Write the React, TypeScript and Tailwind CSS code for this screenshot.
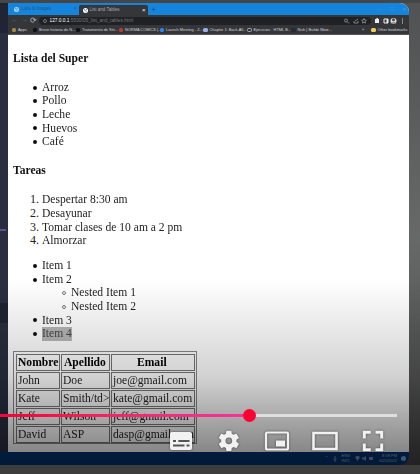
import type { ReactNode } from "react";

function T({ children, className = "" }: { children: ReactNode; className?: string }) {
  return <span className={`inline-block origin-left scale-x-[0.965] whitespace-nowrap ${className}`}>{children}</span>;
}

function Item({ children, mark = "disc", nested = false }: { children: ReactNode; mark?: string; nested?: boolean }) {
  return (
    <li className={`flex h-[13.6px] items-center ${nested ? "pl-[40px]" : "pl-[11px]"}`}>
      <span className="flex w-[18px] shrink-0 justify-end">
        {mark === "disc" && <i className="mr-[5.5px] size-[4px] rounded-full bg-[#111]" />}
        {mark === "circle" && <i className="mr-[5.5px] size-[4px] rounded-full border-[0.7px] border-[#777]" />}
        {mark !== "disc" && mark !== "circle" && <span className="mr-[3px]">{mark}</span>}
      </span>
      {children}
    </li>
  );
}

function Globe({ className = "" }: { className?: string }) {
  return (
    <svg viewBox="0 0 10 10" className={`size-[5px] shrink-0 ${className}`}>
      <circle cx="5" cy="5" r="5" fill="currentColor" />
      <path d="M2 3l3 1-1 2M6 2l2 2M5 8l2-2" stroke="#1c6ba8" strokeWidth="1.2" fill="none" />
    </svg>
  );
}

function Mark({ width, children, icon }: { width: string; children: ReactNode; icon: string }) {
  return (
    <div className={`flex shrink-0 items-center gap-[2px] ${width}`}>
      <i className={`size-[4.5px] shrink-0 rounded-[1.5px] ${icon}`} />
      <span className="whitespace-nowrap">{children}</span>
    </div>
  );
}

function Row({ cells, head = false }: { cells: string[]; head?: boolean }) {
  const cell = "flex items-center border border-[#777] h-[17px] pt-[2px] shrink-0 ";
  return (
    <div className={`flex h-[17px] gap-px ${head ? "font-bold text-black" : ""}`}>
      <div className={cell + "w-[44px] pl-px"}><T>{cells[0]}</T></div>
      <div className={cell + "w-[49px] " + (head ? "pl-[2.500px]" : "pl-px")}><T>{cells[1]}</T></div>
      <div className={cell + "w-[84px] " + (head ? "justify-center" : "pl-px")}><T>{cells[2]}</T></div>
    </div>
  );
}

function Controls() {
  return (
    <>
      <div className="absolute left-0 top-[414px] flex h-[3px] w-[397px] items-center bg-[#dedede]">
        <div className="h-full w-[250px] bg-linear-to-r from-[#f5063b] from-10% to-[#f3349b]" />
        <i className="-ml-[7px] size-[13px] shrink-0 rounded-full bg-[#ff0033]" />
      </div>
      <svg className="absolute left-[160px] top-[425px] drop-shadow-[0_0_1px_rgba(0,0,0,0.5)]" width="230" height="34" viewBox="160 425 230 34">
        <rect x="170" y="432" width="22" height="18" rx="2" fill="#f2f2f2" />
        <path d="M173 441h3M178.300 441h11.200M173 445.500h11.500M186.500 445.500h3" stroke="#555" strokeWidth="2" />
        <path transform="translate(216.600 428.600) scale(1.02)" fill="#f2f2f2" fillRule="evenodd" d="M19.430 12.980c.04-.32.070-.64.070-.98s-.03-.66-.070-.98l2.110-1.650a.5.500 0 0 0 .12-.64l-2-3.460a.5.500 0 0 0-.61-.22l-2.490 1a7.300 7.300 0 0 0-1.690-.98l-.38-2.650A.5.500 0 0 0 14 2h-4a.5.500 0 0 0-.49.420l-.38 2.650c-.61.250-1.170.590-1.690.980l-2.490-1a.5.500 0 0 0-.61.220l-2 3.460a.5.500 0 0 0 .12.640l2.110 1.650c-.04.320-.07.650-.07.980s.03.660.070.980l-2.110 1.650a.5.500 0 0 0-.12.640l2 3.460c.12.220.390.300.61.220l2.490-1c.52.400 1.080.730 1.690.980l.38 2.650c.03.240.24.420.49.420h4c.25 0 .46-.18.490-.42l.38-2.650c.61-.25 1.170-.59 1.690-.98l2.490 1c.23.090.49 0 .61-.22l2-3.460a.5.500 0 0 0-.12-.64zM12 15.300a3.300 3.300 0 1 1 0-6.600 3.300 3.300 0 0 1 0 6.600z" />
        <rect x="266" y="432.500" width="22" height="17" rx="1.500" fill="none" stroke="#f2f2f2" strokeWidth="2.200" />
        <rect x="276" y="440.500" width="9" height="6" fill="#f2f2f2" />
        <rect x="313.500" y="433" width="23" height="16" fill="none" stroke="#f2f2f2" strokeWidth="2.600" />
        <path d="M364.300 438.500v-6.200h6.500M375.500 432.300h6.200v6.200M381.700 443.500v6.200h-6.200M370.800 449.700h-6.500v-6.200" fill="none" stroke="#f2f2f2" strokeWidth="3" />
      </svg>
    </>
  );
}

export default function App() {
  return (
    <div className="relative h-[474px] w-[420px] overflow-hidden bg-linear-to-b from-[#505253] via-[#656967] via-50% to-[#464646] font-['Liberation_Sans',Arial,sans-serif]">
      <div className="h-[3px] bg-[#464646]" />
      <div className="flex h-[449px]">
        <aside className="w-[7.5px] shrink-0 bg-[#2a2e40]">
          <div className="h-[30px] bg-[#202435]" />
          <div className="mt-[196px] h-[2px] w-[6px] bg-[#64508c]" />
          <div className="mt-[72px] h-[20px] bg-[#202333]" />
        </aside>
        <main className="flex w-[401.500px] shrink-0 flex-col overflow-hidden rounded-tr-[9px] bg-white">
          <div className="flex h-[12px] shrink-0 items-stretch bg-[#1784dc] text-[4.500px]">
            <div className="flex w-[71px] items-center pl-[6px] text-[#15578c]">
              <Globe className="text-[#a9d8fb]" /><span className="ml-[3px] grow">Lists & Images</span><span className="mr-[2px]">×</span>
            </div>
            <div className="mt-[2px] flex w-[69px] items-center rounded-t-[2px] bg-[#34363a] pl-[4px] text-[#aaa]">
              <Globe className="text-white" /><span className="ml-[2px] grow">List and Tables</span><span className="mr-[2px] text-[6px] text-white">×</span>
            </div>
            <span className="ml-[4px] self-center text-[7px] leading-none text-[#103d67]">+</span>
            <div className="mr-[3px] ml-auto flex items-center gap-[9px] text-[6px] text-[#4a9ee2]"><span>–</span><span>□</span><span>×</span></div>
          </div>
          <div className="flex h-[11px] shrink-0 items-center bg-[#34363a] text-[5px] text-[#bbb]">
            <span className="ml-[4px] w-[10px] text-[6px] text-[#777]">←</span>
            <span className="w-[8px] text-[6px] text-[#777]">→</span>
            <span className="w-[9px] text-[8px] leading-none">⟳</span>
            <div className="flex h-[8px] w-[332px] shrink-0 items-center rounded-full bg-[#202124] px-[3px] text-[4.800px]">
              <i className="mr-[3px] ml-[1px] size-[4px] rounded-full border border-[#777]" />
              <span className="text-white">127.0.0.1</span><span className="grow text-[#777]">:5500/05_list_and_tables.html</span>
              <svg width="25" height="6" viewBox="0 0 25 6" fill="none" stroke="#999" strokeWidth=".8"><circle cx="3" cy="2.500" r="1.500" /><path d="M4 3.500l2 2M11 3v2h4V3M12 3l3-2M21 .5l.7 1.500 1.700.2-1.200 1.200.3 1.700-1.500-.8-1.500.8.3-1.700-1.200-1.200 1.700-.2z" /></svg>
            </div>
            <svg className="ml-[2px] shrink-0" width="34" height="8" viewBox="0 0 34 8"><path d="M2 2h1.200a1 1 0 0 1 2 0H6v4H2z" fill="#eee" /><path d="M11 2h4v4h-4z" fill="none" stroke="#eee" /><path d="M13.500 2H15v4h-1.500z" fill="#eee" /><circle cx="20.500" cy="4" r="3" fill="#ddd" /><circle cx="20.500" cy="2.800" r="1.500" fill="#5b4238" /><path d="M18.500 6h4" stroke="#654" /><path d="M29.500 1.500v1M29.500 3.500v1M29.500 5.500v1" stroke="#ddd" /></svg>
          </div>
          <div className="flex h-[9px] shrink-0 items-center border-b border-[#555] bg-[#34363a] pl-[4px] text-[3.900px] text-[#d5d5d5]">
            <Mark width="w-[21px]" icon="bg-[#a28745]">Apps</Mark>
            <Mark width="w-[43px]" icon="bg-[#111]">Breve historia de N...</Mark>
            <Mark width="w-[43px]" icon="bg-[#111]">Tratamiento de Stri...</Mark>
            <Mark width="w-[41px]" icon="bg-[#b43d35]">NORMA COMICS |...</Mark>
            <Mark width="w-[43.500px]" icon="bg-[#2f84f0]">Launch Meeting - Z...</Mark>
            <Mark width="w-[44px]" icon="bg-[#9aaeea]">Chapter 1: Back-All...</Mark>
            <Mark width="w-[44px]" icon="border border-[#aaa]">Ejercicios · HTML B...</Mark>
            <Mark width="w-[71px]" icon="bg-[#292b2e]">Nish | Buildz Mate...</Mark>
            <span className="w-[9px]">»</span>
            <Mark width="w-[38px]" icon="bg-[#f0cc58]">Other bookmarks</Mark>
          </div>
          <section className="pl-[5.500px] pt-[16.700px] font-['Liberation_Serif','Times_New_Roman',serif] text-[12px] leading-[13.600px] text-[#222]">
            <h4 className="h-[13.600px] font-bold text-[#111]"><T>Lista del Super</T></h4>
            <ul className="mt-[15.500px]">
              <Item><T>Arroz</T></Item><Item><T>Pollo</T></Item><Item><T>Leche</T></Item><Item><T>Huevos</T></Item><Item><T>Café</T></Item>
            </ul>
            <h4 className="mt-[15.500px] h-[13.600px] font-bold text-[#111]"><T>Tareas</T></h4>
            <ol className="mt-[15.500px]">
              <Item mark="1."><T>Despertar 8:30 am</T></Item><Item mark="2."><T>Desayunar</T></Item><Item mark="3."><T>Tomar clases de 10 am a 2 pm</T></Item><Item mark="4."><T>Almorzar</T></Item>
            </ol>
            <ul className="mt-[11.500px]">
              <Item><T>Item 1</T></Item><Item><T>Item 2</T></Item>
              <Item nested mark="circle"><T>Nested Item 1</T></Item><Item nested mark="circle"><T>Nested Item 2</T></Item>
              <Item><T>Item 3</T></Item><Item><T className="bg-[#b6b6b6] text-[#444]">Item 4</T></Item>
            </ul>
            <div className="mt-[10.500px] flex h-[93px] w-[184px] flex-col gap-px border border-[#888] p-[1.500px]">
              <Row head cells={["Nombre", "Apellido", "Email"]} />
              <Row cells={["John", "Doe", "joe@gmail.com"]} />
              <Row cells={["Kate", "Smith/td>", "kate@gmail.com"]} />
              <Row cells={["Jeff", "Wilson", "jeff@gmail.com"]} />
              <Row cells={["David", "ASP", "dasp@gmail.com"]} />
            </div>
          </section>
        </main>
      </div>
      <footer className="flex h-[13px] w-[409px] items-center justify-end rounded-br-[9px] bg-[#033576] pr-[3px] text-[4px] leading-[4.500px] text-[#a5b7cc]">
        <span className="mr-[5px]">⌃</span>
        <svg className="mr-[5px]" width="4" height="6" viewBox="0 0 4 6" stroke="#8294aa" fill="none"><path d="M2 0v3M.5 3q1.500 2 3 0M2 4v2" /></svg>
        <span className="mr-[5px]">ENG<br />INTL</span>
        <svg className="mr-[5px]" width="19" height="5" viewBox="0 0 19 5" fill="#8294aa"><path d="M0 1q2.500-2 5 0L2.500 5zM7 1.500h2L11 0v5L9 3.500H7zM14 1h4v3h-4z" /></svg>
        <span className="mr-[4px] text-right">8:08 PM<br />6/21/2022</span>
        <i className="size-[5px] rounded-full bg-[#6fb2ef]" />
      </footer>
      <div className="pointer-events-none absolute inset-x-0 bottom-0 h-[194px] bg-linear-to-b from-transparent via-black/18 via-50% to-black/56" />
      <div className="absolute inset-x-0 bottom-0 h-[9px] bg-[#454545]/80" />
      <Controls />
    </div>
  );
}
